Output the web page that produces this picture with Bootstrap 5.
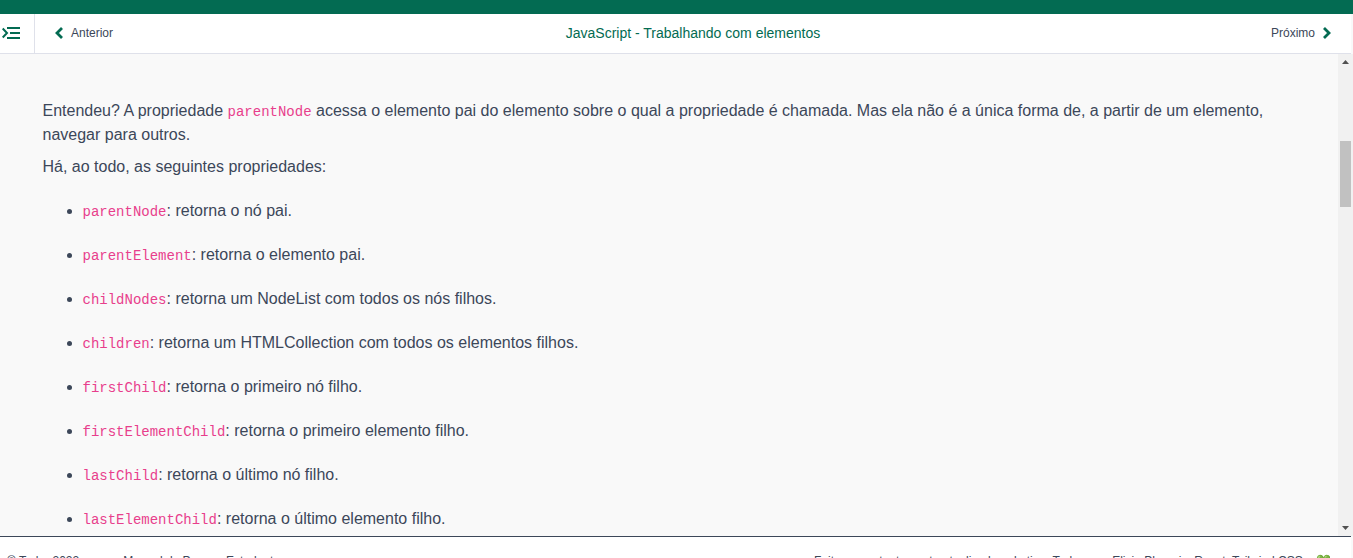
<!DOCTYPE html>
<html lang="pt-BR">
<head>
<meta charset="utf-8">
<meta name="viewport" content="width=device-width, initial-scale=1">
<title>JavaScript - Trabalhando com elementos</title>
<link href="https://cdn.jsdelivr.net/npm/bootstrap@5.3.0/dist/css/bootstrap.min.css" rel="stylesheet">
<style>
body{font-family:"Liberation Sans",Arial,sans-serif;color:#3c4759;background:#f9f9f9;height:558px}
.brand-strip{height:14px;background:#036b52}
.lesson-nav{height:40px;width:1351px;border-bottom:1px solid #dfe1ea;font-size:12px}
.accent{color:#036b52}
.toggle-cell{width:35px;border-right:1px solid #dfe1ea;padding:0 0 1px 2px}
.lesson-title{font-size:14px}
.side-prev{padding:0 0 1px 20px}
.side-next{padding:0 20px 1px 0}
.viewport-area{height:482px;background:#f9f9f9}
.reader{padding:45px 42.5px 0;line-height:24px}
.reader p{margin-bottom:8px}
.reader ul{margin-top:20px;padding-left:40px}
.reader li{margin-bottom:20px}
.reader code{font-family:"Liberation Mono",monospace;font-size:14px;line-height:1;color:#e83e8c}
.track{width:15px;background:#f1f1f1}
.thumb{width:11px;height:66px;margin-top:72px;background:#c1c1c1}
.page-foot{height:22px;border-top:1px solid #3c4759;width:1351px;padding:15px 20px 0 7px;font-size:12px;line-height:18px}
.foot-link{margin-left:44px}
</style>
</head>
<body class="overflow-hidden d-flex flex-column">
<div class="brand-strip flex-shrink-0"></div>
<nav class="lesson-nav d-flex flex-shrink-0 bg-white">
  <div class="toggle-cell d-flex align-items-center accent">
    <svg width="18" height="14" viewBox="0 0 18 14" fill="none" stroke="currentColor" stroke-width="2"><path d="M.7 2.5 5 7 .7 11.5M5 2h13M8 7h10M5 12h13"/></svg>
  </div>
  <div class="side-prev d-flex align-items-center flex-fill w-25"><svg class="accent me-2" width="8" height="12" viewBox="0 0 8 12" fill="none" stroke="currentColor" stroke-width="2.8"><path d="M7 1 2 6l5 5"/></svg>Anterior</div>
  <div class="lesson-title accent d-flex align-items-center">JavaScript - Trabalhando com elementos</div>
  <div class="side-next d-flex align-items-center justify-content-end flex-fill w-25">Próximo<svg class="accent ms-2" width="8" height="12" viewBox="0 0 8 12" fill="none" stroke="currentColor" stroke-width="2.8"><path d="m1 1 5 5-5 5"/></svg></div>
</nav>
<div class="viewport-area d-flex flex-shrink-0 overflow-hidden">
  <main class="reader flex-fill">
    <p>Entendeu? A propriedade <code>parentNode</code> acessa o elemento pai do elemento sobre o qual a propriedade é chamada. Mas ela não é a única forma de, a partir de um elemento, navegar para outros.</p>
    <p>Há, ao todo, as seguintes propriedades:</p>
    <ul>
      <li><code>parentNode</code>: retorna o nó pai.</li>
      <li><code>parentElement</code>: retorna o elemento pai.</li>
      <li><code>childNodes</code>: retorna um NodeList com todos os nós filhos.</li>
      <li><code>children</code>: retorna um HTMLCollection com todos os elementos filhos.</li>
      <li><code>firstChild</code>: retorna o primeiro nó filho.</li>
      <li><code>firstElementChild</code>: retorna o primeiro elemento filho.</li>
      <li><code>lastChild</code>: retorna o último nó filho.</li>
      <li><code>lastElementChild</code>: retorna o último elemento filho.</li>
    </ul>
  </main>
  <div class="track d-flex flex-column align-items-center justify-content-between flex-shrink-0">
    <div class="d-flex flex-column align-items-center"><svg width="7" height="15" viewBox="0 0 7 15"><path d="M0 10h7L3.5 6z" fill="#505050"/></svg><div class="thumb"></div></div>
    <svg width="7" height="15" viewBox="0 0 7 15"><path d="M0 5h7L3.5 9z" fill="#505050"/></svg>
  </div>
</div>
<footer class="page-foot d-flex justify-content-between flex-shrink-0 overflow-hidden bg-white">
  <div class="d-flex"><span>© Trybe 2022</span><span class="foot-link">Manual da Pessoa Estudante</span></div>
  <div>Feito e constantemente atualizado pelo time Trybe com Elixir, Phoenix, React, Tailwind CSS e 💚</div>
</footer>
<script src="https://cdn.jsdelivr.net/npm/bootstrap@5.3.0/dist/js/bootstrap.bundle.min.js"></script>
</body>
</html>
